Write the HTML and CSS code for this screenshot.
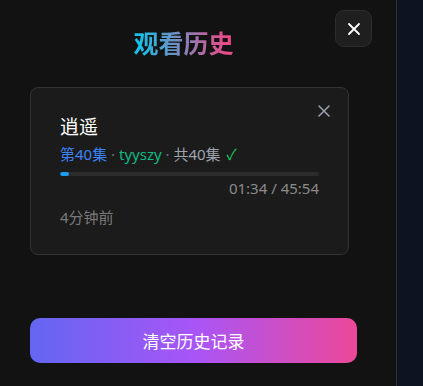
FILE: index.html
```html
<!DOCTYPE html>
<html lang="zh">
<head>
<meta charset="utf-8">
<title>观看历史</title>
<link rel="stylesheet" href="styles.css">
</head>
<body>
<div class="layout">
  <aside class="panel">
    <button class="close-btn" aria-label="关闭">
      <svg width="14" height="14" viewBox="0 0 14 14"><path d="M2 2L12 12M12 2L2 12" stroke="#ffffff" stroke-width="1.8" stroke-linecap="round"/></svg>
    </button>
    <h2 class="title">观看历史</h2>
    <div class="card">
      <button class="remove" aria-label="删除">
        <svg width="12" height="12" viewBox="0 0 12 12"><path d="M1 1L11 11M11 1L1 11" stroke="#9ca3af" stroke-width="1.5" stroke-linecap="round"/></svg>
      </button>
      <div class="card-title">逍遥</div>
      <div class="meta"><span class="ep">第40集</span><span class="dot"> · </span><span class="src">tyyszy</span><span class="dot"> · </span><span class="total">共40集</span> <span class="check">✓</span></div>
      <div class="progress"><div class="fill" style="width:3.4%"></div></div>
      <div class="time">01:34 / 45:54</div>
      <div class="ago">4分钟前</div>
    </div>
    <button class="clear">清空历史记录</button>
  </aside>
  <main class="rest"></main>
</div>
</body>
</html>
```
FILE: styles.css
```css
* { box-sizing: border-box; }
html, body { margin: 0; padding: 0; height: 100%; }
body {
  font-family: "Noto Sans", "Noto Sans CJK SC", sans-serif;
  background: #0d1320;
  color: #fff;
}
.layout { display: flex; height: 100%; }
.panel {
  position: relative;
  width: 397px;
  flex: none;
  background: #121212;
  border-right: 1px solid #333333;
  padding: 0 0 0 30px;
}
.rest { flex: 1; background: #0d1321; }
.close-btn {
  position: absolute;
  top: 10px;
  left: 335px;
  width: 37px;
  height: 37px;
  border-radius: 9px;
  background: #1f1f1f;
  border: 1px solid #2d2d2d;
  display: flex;
  align-items: center;
  justify-content: center;
  padding: 0;
}
.title {
  margin: 26px 0 0 0;
  width: 307px;
  text-align: center;
  font-family: "Noto Sans CJK SC", sans-serif;
  font-size: 25px;
  font-weight: 700;
  line-height: 32px;
  background: linear-gradient(90deg, #19bfe9 36%, #ec4a8a 64%);
  -webkit-background-clip: text;
  background-clip: text;
  color: transparent;
}
.card {
  position: relative;
  margin-top: 29px;
  width: 319px;
  background: #1b1b1b;
  border: 1px solid #333333;
  border-radius: 8px;
  padding: 25px 29px 27px 29px;
}
.remove {
  position: absolute;
  top: 17px;
  right: 18px;
  background: none;
  border: none;
  padding: 0;
  width: 12px;
  height: 12px;
  display: flex;
}
.card-title {
  font-family: "Noto Sans CJK SC", sans-serif;
  font-size: 19px;
  line-height: 26px;
  color: #ffffff;
}
.meta {
  margin-top: 4px;
  font-size: 15px;
  line-height: 22px;
  color: #9ca3af;
}
.ep { color: #3b82f6; }
.src { color: #10b981; }
.dot { color: #6b7280; }
.check { color: #22c55e; margin-left: 2px; }
.progress {
  margin-top: 7px;
  height: 4px;
  border-radius: 2px;
  background: #2c2c2c;
  overflow: hidden;
}
.fill { height: 100%; background: #1a9cf0; border-radius: 2px; }
.time {
  margin-top: 2px;
  text-align: right;
  font-size: 15px;
  line-height: 20px;
  color: #8a8a8a;
}
.ago {
  margin-top: 9px;
  font-size: 15px;
  line-height: 20px;
  color: #7a7a7a;
}
.clear {
  display: block;
  margin-top: 63px;
  width: 327px;
  height: 45px;
  border: none;
  border-radius: 10px;
  background: linear-gradient(90deg, #6366f1 0%, #a855f7 50%, #ec4899 100%);
  color: #ffffff;
  font-family: "Noto Sans CJK SC", sans-serif;
  font-size: 17px;
}
```
